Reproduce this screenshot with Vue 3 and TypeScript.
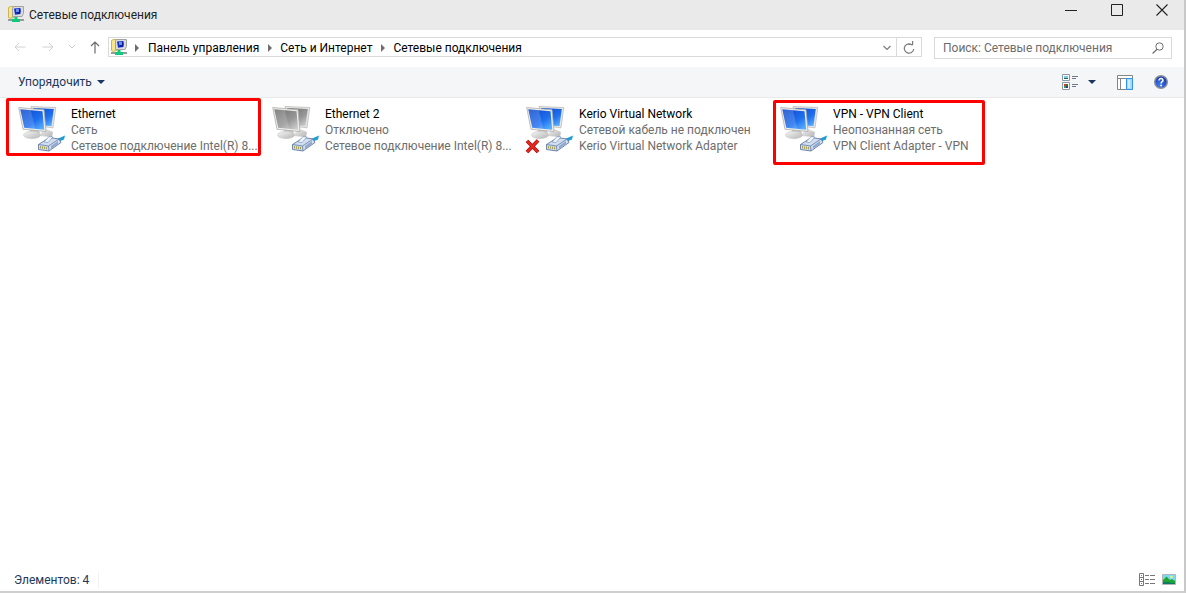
<script setup lang="ts">
import { ref } from 'vue'

interface Connection {
  name: string
  status: string
  device: string
  disabled?: boolean
  unplugged?: boolean
  mark?: string
}

const crumbs: string[] = ['Панель управления', 'Сеть и Интернет', 'Сетевые подключения']

const connections: Connection[] = [
  { name: 'Ethernet', status: 'Сеть', device: 'Сетевое подключение Intel(R) 8...', mark: 'mark-wide' },
  { name: 'Ethernet 2', status: 'Отключено', device: 'Сетевое подключение Intel(R) 8...', disabled: true },
  { name: 'Kerio Virtual Network', status: 'Сетевой кабель не подключен', device: 'Kerio Virtual Network Adapter', unplugged: true },
  { name: 'VPN - VPN Client', status: 'Неопознанная сеть', device: 'VPN Client Adapter - VPN', mark: 'mark-narrow' },
]

const query = ref('')
</script>

<template>
  <div class="window">
    <svg class="defs" width="0" height="0" aria-hidden="true">
      <defs>
        <linearGradient id="screen-blue" x1="0.1" y1="0" x2="0.9" y2="1">
          <stop offset="0" stop-color="#0c48cc" />
          <stop offset="0.6" stop-color="#1f6fee" />
          <stop offset="1" stop-color="#5cb4ff" />
        </linearGradient>
        <linearGradient id="screen-grey" x1="0.1" y1="0" x2="0.9" y2="1">
          <stop offset="0" stop-color="#707070" />
          <stop offset="0.6" stop-color="#979797" />
          <stop offset="1" stop-color="#d0d0d0" />
        </linearGradient>
        <linearGradient id="stand" x1="0" y1="0" x2="1" y2="1">
          <stop offset="0" stop-color="#f6f6f6" />
          <stop offset="1" stop-color="#b4b4b4" />
        </linearGradient>
        <radialGradient id="help" cx="0.4" cy="0.75" r="0.8">
          <stop offset="0" stop-color="#3f7df0" />
          <stop offset="1" stop-color="#1330a0" />
        </radialGradient>
        <symbol id="network" viewBox="0 0 16 16">
          <path d="M.5 1.500 2.500.5H6v11l-4 .8-1.500-.8z" fill="#f6e88a" stroke="#c9b552" />
          <path d="M4.500 1.500 6 .5h9.500v7L14 10.500H4.500z" fill="#dcdcdc" stroke="#a3a3a3" />
          <path d="M6 2.500 12.500 2v6L7 8.800z" fill="#1230c4" />
          <path d="M8 3h3v3H8z" fill="#6d8cf6" />
          <path d="M11 3.500h1.500v3h-1V8H9.500V6H11z" fill="#0a1a8c" />
          <path d="M0 14h16" stroke="#9a9a9a" stroke-width="2" />
          <path d="M6.500 11h3v2H12v3H4v-3h2.500z" fill="#0fca7c" />
        </symbol>
      </defs>
    </svg>

    <header class="title-bar">
      <svg class="icon16" viewBox="0 0 16 16" aria-hidden="true"><use href="#network" /></svg>
      <h1>Сетевые подключения</h1>
      <div class="caption">
        <button type="button" aria-label="Свернуть">
          <svg width="12" height="12" viewBox="0 0 12 12"><path d="M0 6.500h12" stroke="#222" /></svg>
        </button>
        <button type="button" aria-label="Развернуть">
          <svg width="12" height="12" viewBox="0 0 12 12"><path d="M.5.5h11v11H.5z" fill="none" stroke="#222" /></svg>
        </button>
        <button type="button" aria-label="Закрыть">
          <svg width="12" height="12" viewBox="0 0 12 12"><path d="m.5.5 11 11m0-11-11 11" stroke="#222" stroke-width="1.100" /></svg>
        </button>
      </div>
    </header>

    <div class="nav-row">
      <div class="history">
        <button type="button" aria-label="Назад" disabled>
          <svg width="12" height="10" viewBox="0 0 12 10"><path d="M11.500 5H1m4-4L1 5l4 4" fill="none" stroke="#d2d2d2" /></svg>
        </button>
        <button type="button" aria-label="Вперёд" disabled>
          <svg width="12" height="10" viewBox="0 0 12 10"><path d="M.5 5H11M7 1l4 4-4 4" fill="none" stroke="#d2d2d2" /></svg>
        </button>
        <button type="button" class="slim" aria-label="Последние расположения" disabled>
          <svg width="8" height="6" viewBox="0 0 8 6"><path d="m1 1 3 3 3-3" fill="none" stroke="#cacaca" /></svg>
        </button>
        <button type="button" class="up" aria-label="Вверх">
          <svg width="10" height="13" viewBox="0 0 10 13"><path d="M5 12.500V1M1 5l4-4 4 4" fill="none" stroke="#6c6c6c" stroke-width="1.200" /></svg>
        </button>
      </div>

      <div class="address">
        <svg class="icon16" viewBox="0 0 16 16" aria-hidden="true"><use href="#network" /></svg>
        <nav aria-label="Адрес">
          <template v-for="crumb in crumbs" :key="crumb">
            <svg class="arrow" width="4" height="8" viewBox="0 0 4 8" aria-hidden="true"><path d="M0 0v8l4-4z" fill="#6e6e6e" /></svg>
            <a href="#">{{ crumb }}</a>
          </template>
        </nav>
        <button type="button" class="drop" aria-label="Предыдущие расположения">
          <svg width="8" height="6" viewBox="0 0 8 6"><path d="m.5 1 3.500 3.500L7.500 1" fill="none" stroke="#7b7b7b" stroke-width="1.200" /></svg>
        </button>
        <button type="button" class="refresh" aria-label="Обновить">
          <svg width="12" height="14" viewBox="0 0 12 14"><path d="M9.500 4.300A4.700 4.700 0 1 0 10.700 8M5.500 3.500H9.600V0" fill="none" stroke="#7b7b7b" stroke-width="1.200" /></svg>
        </button>
      </div>

      <label class="search">
        <input v-model="query" type="text" aria-label="Поиск" placeholder="Поиск: Сетевые подключения" />
        <svg width="12" height="12" viewBox="0 0 12 12" aria-hidden="true"><circle cx="7.500" cy="4.500" r="3.700" fill="none" stroke="#6e6e6e" /><path d="M5 7.200.6 11.500" stroke="#6e6e6e" stroke-width="1.200" /></svg>
      </label>
    </div>

    <div class="toolbar">
      <button type="button" class="organize">
        Упорядочить
        <svg width="8" height="4" viewBox="0 0 8 4" aria-hidden="true"><path d="M0 0h8L4 4z" fill="#1a3560" /></svg>
      </button>
      <div class="tools">
        <button type="button" aria-label="Изменить представление">
          <svg width="16" height="16" viewBox="0 0 16 16">
            <path d="M.5.500h7v6h-7zM.5 8.500h7v7h-7z" fill="#fff" stroke="#8d97a3" />
            <path d="M2 2h4v2H2z" fill="#79c7f5" /><path d="M2 4h4v1H2z" fill="#22684d" />
            <path d="M2 10h2v2H2z" fill="#d8382b" /><path d="M4 10h2v2H4z" fill="#38752d" /><path d="M2 12h2v2H2z" fill="#469c35" /><path d="M4 12h2v2H4z" fill="#263d9b" />
            <path d="M10 2.500h6M10 4.500h4M10 10.500h6M10 12.500h4" stroke="#6d7888" />
          </svg>
        </button>
        <button type="button" class="more" aria-label="Другие параметры">
          <svg width="8" height="4" viewBox="0 0 8 4"><path d="M0 0h8L4 4z" fill="#1a3560" /></svg>
        </button>
        <button type="button" class="pane" aria-label="Область просмотра">
          <svg width="16" height="15" viewBox="0 0 16 15">
            <path d="M.5.500h15v14H.5z" fill="#fff" stroke="#858585" />
            <path d="M1 3.500h14M3.500 3v11" stroke="#858585" />
            <path d="M9.500 3.500h6v11h-6z" fill="#a8d8fb" stroke="#3095e8" />
            <path d="M11 5h2v8h-2z" fill="#d4edfd" />
          </svg>
        </button>
        <button type="button" class="help" aria-label="Справка">
          <svg width="14" height="14" viewBox="0 0 14 14">
            <circle cx="7" cy="7" r="6.300" fill="url(#help)" stroke="#8b909a" stroke-width="1.400" />
            <path d="M5 5.400C5 2.800 9.200 3 9 5.400 8.900 6.700 7.100 6.700 7.100 8.400" fill="none" stroke="#fff" stroke-width="1.500" />
            <circle cx="7.100" cy="10.500" r="0.900" fill="#fff" />
          </svg>
        </button>
      </div>
    </div>

    <main>
      <ul class="connections">
        <li v-for="item in connections" :key="item.name" class="item">
          <svg class="adapter" viewBox="9 104 56 52" aria-hidden="true">
            <path d="m44 128 9 4-1 5-13-1z" fill="url(#stand)" />
            <path d="m31 106.500 24.800 1-2.800 20.300-18-2z" fill="#e6e6e4" stroke="#b6b6b4" stroke-width="0.700" />
            <path d="m33 108 20.800 1-2.300 17-15.500-1z" :fill="item.disabled ? 'url(#screen-grey)' : 'url(#screen-blue)'" />
            <path d="m30 129 9 1 1 4H30z" fill="#c5c5c5" />
            <ellipse cx="32" cy="135" rx="8.500" ry="3.700" fill="url(#stand)" stroke="#c0c0c0" stroke-width="0.500" />
            <path d="m18.700 107.500 25.300 2.300 2 21.700-23-2.200z" fill="#eeeeec" stroke="#adadab" stroke-width="0.800" />
            <path d="m20.300 109.200 22.200 2 1.700 18.600-19.900-2z" :fill="item.disabled ? 'url(#screen-grey)' : 'url(#screen-blue)'" />
            <path d="m20.300 109.200 10.500.9 4.500 18.800-11-1.100z" fill="#fff" opacity="0.160" />
            <path d="m57 139 8-3.500-1 4-6 2.500z" fill="#1e9fd4" />
            <path d="m38.500 144.500 11-7 9.500 1.500 2 3.500-12 8.500-10.500-1.500z" fill="#d0def0" stroke="#627ba3" stroke-width="0.900" />
            <path d="m38.500 144.500 10 1.500.5 5m-.5-5L59 139" fill="none" stroke="#627ba3" stroke-width="0.800" />
            <path d="m44 142 5-5.500 4 .5-5 5.500z" fill="#eef4fb" stroke="#7188ad" stroke-width="0.600" />
            <path d="m51 146 7-5v3l-7 5z" fill="#90a9cd" />
            <path d="M40.500 146v2.500m2-2.200v2.500m2-2.200v2.500m2-2.200v2.500" stroke="#a39a48" stroke-width="0.900" />
            <path v-if="item.unplugged" d="m19 141 11 11m0-11.500L19 152" fill="none" stroke="#a90c0c" stroke-width="3.600" />
            <path v-if="item.unplugged" d="m19 141 11 11m0-11.500L19 152" fill="none" stroke="#e9281f" stroke-width="2.200" />
          </svg>
          <div class="text">
            <strong>{{ item.name }}</strong>
            <span>{{ item.status }}</span>
            <span>{{ item.device }}</span>
          </div>
          <div v-if="item.mark" class="mark" :class="item.mark"></div>
        </li>
      </ul>
    </main>

    <footer>
      <span class="count">Элементов: 4</span>
      <div class="views">
        <button type="button" aria-label="Таблица">
          <svg width="16" height="13" viewBox="0 0 16 13">
            <path d="M.5.500h4v12h-4zM.5 4.500h4m-4 4h4" fill="#fff" stroke="#777" />
            <path d="M2 2h1v1H2z" fill="#3696c8" /><path d="M2 6h1v1H2z" fill="#c92d35" /><path d="M2 10h1v1H2z" fill="#3696c8" />
            <path d="M6 2.500h4m1 0h5m-10 4h4m1 0h5m-10 4h4m1 0h5" stroke="#777" />
          </svg>
        </button>
        <button type="button" aria-label="Крупные значки">
          <svg width="14" height="11" viewBox="0 0 14 11">
            <path d="M.5.500h13v10H.5z" fill="#79daf5" stroke="#b5b5b5" />
            <circle cx="9.500" cy="3" r="1.300" fill="#f8ec78" />
            <path d="M1 6 4.500 2.500 8 6l2-1 3 2v3H1z" fill="#20a52f" />
            <path d="M1 8h6l2 1h4v1H1z" fill="#0b7c66" />
          </svg>
        </button>
      </div>
    </footer>
  </div>
</template>

<style>
body {
  margin: 0;
  background: #fff;
}
</style>

<style scoped>
.window {
  box-sizing: border-box;
  min-height: 100vh;
  display: flex;
  flex-direction: column;
  background: #fff;
  border-right: 2px solid #c8c8c8;
  border-bottom: 2px solid #cfcfcf;
  font: 12px/16px Roboto, "Open Sans", sans-serif;
  color: #000;
}
.defs {
  position: absolute;
}
button {
  display: flex;
  align-items: center;
  justify-content: center;
  padding: 0;
  border: 0;
  background: none;
  font: inherit;
  color: inherit;
}
.icon16 {
  flex: none;
  width: 16px;
  height: 16px;
}
.title-bar {
  height: 30px;
  box-sizing: border-box;
  display: flex;
  align-items: center;
  gap: 5px;
  padding-left: 8px;
  background: #eaeaea;
}
.title-bar .icon16 {
  margin-bottom: 2px;
}
h1 {
  margin: 0;
  font-size: 12px;
  font-weight: 400;
  color: #222;
}
.caption {
  display: flex;
  align-self: flex-start;
  margin-left: auto;
}
.caption button {
  width: 46px;
  height: 20px;
}
.caption button:last-child {
  width: 44px;
}
.nav-row {
  box-sizing: border-box;
  height: 37px;
  display: flex;
  align-items: flex-start;
  padding-top: 7px;
}
.history {
  display: flex;
  align-items: center;
  padding-left: 6px;
}
.history button {
  width: 28px;
  height: 20px;
}
.history .slim {
  width: 20px;
}
.history .up {
  width: 26px;
}
.address {
  flex: 1;
  min-width: 0;
  box-sizing: border-box;
  height: 20px;
  display: flex;
  align-items: center;
  padding-left: 2px;
  border: 1px solid #d9d9d9;
}
.address nav {
  display: flex;
  align-items: center;
  flex: 1;
  min-width: 0;
  padding-top: 2px;
  white-space: nowrap;
}
.arrow {
  margin: 0 9px 0 8px;
}
.address nav .arrow:not(:first-child) {
  margin: 0 8px 0 9px;
}
.address a {
  color: #000;
  text-decoration: none;
}
.address button {
  height: 18px;
  padding-top: 2px;
}
.drop {
  width: 18px;
}
.refresh {
  width: 25px;
  border-left: 1px solid #d9d9d9;
}
.search {
  box-sizing: border-box;
  width: 238px;
  height: 22px;
  display: flex;
  align-items: center;
  margin: 0 12px;
  padding: 0 7px 0 8px;
  border: 1px solid #d9d9d9;
}
.search input {
  flex: 1;
  min-width: 0;
  padding: 0;
  border: 0;
  outline: 0;
  background: none;
  font: inherit;
}
.search input::placeholder {
  color: #6d6d6d;
  opacity: 1;
}
.toolbar {
  height: 30px;
  display: flex;
  align-items: center;
  justify-content: space-between;
  padding: 0 16px 0 18px;
  background: #f5f6f7;
  border-bottom: 1px solid #e8e9ea;
  color: #1e395b;
}
.organize {
  gap: 5px;
}
.tools {
  display: flex;
  align-items: center;
}
.more {
  margin-left: 10px;
}
.pane {
  margin-left: 21px;
}
.help {
  margin-left: 21px;
}
main {
  flex: 1;
}
.connections {
  display: grid;
  grid-template-columns: repeat(auto-fill, 254px);
  margin: 0;
  padding: 6px 0 0 9px;
  list-style: none;
}
.item {
  position: relative;
  display: flex;
  gap: 6px;
}
.adapter {
  flex: none;
  width: 56px;
  height: 52px;
}
.text {
  flex: 1;
  min-width: 0;
  display: flex;
  flex-direction: column;
  padding-top: 2px;
  color: #6d6d6d;
  white-space: nowrap;
}
.text strong {
  font-weight: 400;
  color: #000;
}
.mark {
  position: absolute;
  box-sizing: border-box;
  border: 3px solid #f00;
  border-radius: 2px;
}
.mark-wide {
  top: -6px;
  left: -3px;
  width: 255px;
  height: 58px;
}
.mark-narrow {
  top: -4px;
  left: 2px;
  width: 212px;
  height: 65px;
}
footer {
  height: 23px;
  display: flex;
  align-items: center;
  justify-content: space-between;
  padding: 0 8px 0 14px;
  color: #1e395b;
}
.count {
  padding-right: 9px;
  border-right: 1px solid #f2f2f2;
}
.views {
  display: flex;
  align-items: center;
  gap: 7px;
}
</style>
